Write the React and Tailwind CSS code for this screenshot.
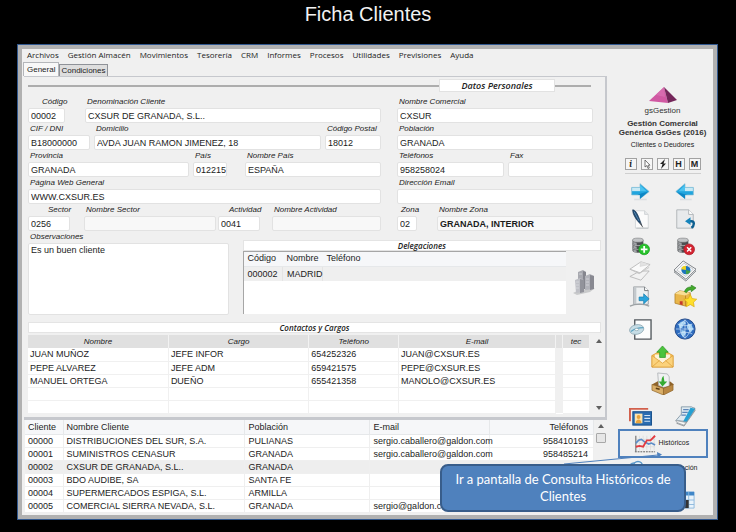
import { useId } from "react";

const menu = ["Archivos", "Gestión Almacén", "Movimientos", "Tesorería", "CRM", "Informes", "Procesos", "Utilidades", "Previsiones", "Ayuda"];

const contactos = [
  ["JUAN MUÑOZ", "JEFE INFOR", "654252326", "JUAN@CXSUR.ES"],
  ["PEPE ALVAREZ", "JEFE ADM", "659421575", "PEPE@CXSUR.ES"],
  ["MANUEL ORTEGA", "DUEÑO", "655421358", "MANOLO@CXSUR.ES"],
  ["", "", "", ""],
  ["", "", "", ""],
];

const clientes = [
  ["00000", "DISTRIBUCIONES DEL SUR, S.A.", "PULIANAS", "sergio.caballero@galdon.com", "958410193"],
  ["00001", "SUMINISTROS CENASUR", "GRANADA", "sergio.caballero@galdon.com", "958485214"],
  ["00002", "CXSUR DE GRANADA, S.L..", "GRANADA", "", ""],
  ["00003", "BDO AUDIBE, SA", "SANTA FE", "", ""],
  ["00004", "SUPERMERCADOS ESPIGA, S.L.", "ARMILLA", "", ""],
  ["00005", "COMERCIAL SIERRA NEVADA, S.L.", "GRANADA", "sergio@galdon.com", ""],
];

function Field({ label, value = "", className = "", labelClass = "pl-[2px]", inputClass = "bg-white" }) {
  const id = useId();
  return (
    <div className={`flex min-w-0 flex-col ${className}`}>
      <label htmlFor={id} className={`block h-3 whitespace-nowrap text-[8px] leading-[12px] font-medium italic ${labelClass}`}>
        {label}
      </label>
      <input
        id={id}
        defaultValue={value}
        className={`h-[15px] w-full min-w-0 rounded-[2px] border border-[#e2e2e2] pl-[2px] text-[9px] leading-[13px] outline-none ${inputClass}`}
      />
    </div>
  );
}

function SectionTitle({ children, className = "" }) {
  return (
    <h2 className={`h-[11px] border border-[#e4e4e4] bg-white text-center text-[8px] leading-[9px] font-semibold italic font-['Open_Sans',sans-serif] ${className}`}>
      {children}
    </h2>
  );
}

/* ---------- icons ---------- */

function Svg({ children, size = "size-[22px]" }) {
  return (
    <svg viewBox="0 0 24 24" className={`${size} shrink-0`} fill="none" aria-hidden="true">
      {children}
    </svg>
  );
}

const ArrowRight = () => (
  <Svg size="size-5">
    <path d="M5 21h15" stroke="#dcdfe2" strokeWidth="2" />
    <path d="M2 6.500h10V2L23 11.500 12 20v-4.500H2z" fill="#21a5de" stroke="#7fb9d2" strokeWidth=".8" />
    <path d="M2.500 7h9.500v4H2.500z" fill="#c9e9f4" />
    <path d="M12 3.500l8 7.500h-8z" fill="#4cc3f0" />
    <path d="M9 15l13-3.500L12 20v-4.500z" fill="#0d86c4" />
  </Svg>
);

const ArrowLeft = () => (
  <Svg size="size-5">
    <path d="M6 21h14" stroke="#dcdfe2" strokeWidth="2" />
    <path d="M22 6.500H12V2L1 11.500 12 20v-4.500h10z" fill="#21a5de" stroke="#7fb9d2" strokeWidth=".8" />
    <path d="M12 7h9.500v4H12z" fill="#c9e9f4" />
    <path d="M12 3.500L4 11h8z" fill="#4cc3f0" />
    <path d="M2 12l13 3.500h-3V20z" fill="#0d86c4" />
  </Svg>
);

const PenPage = () => (
  <Svg>
    <path d="M7 3h10l4 4v15H7z" fill="#fbfbfb" stroke="#d2d5d8" />
    <path d="M17 3v4h4" fill="#e6e8ea" stroke="#cfd2d5" />
    <path d="M8 22h13" stroke="#b9bdc0" />
    <path d="M4 2c3 0 5 4 7 9l3 8-4-4C7 11 4 7 4 2z" fill="#1d4a73" stroke="#122f4d" strokeWidth=".7" />
    <path d="M5.500 4c2 3 3 6 5.500 10" stroke="#6f9fc6" strokeWidth=".8" />
    <path d="M12 16l3 5" stroke="#555" strokeWidth="1" />
  </Svg>
);

const UndoPage = () => (
  <Svg>
    <path d="M3 2h13l5 5v15H3z" fill="#e8eaec" stroke="#aeb2b6" />
    <path d="M16 2v5h5" fill="#fff" stroke="#aeb2b6" />
    <path d="M16 14.500h3c3.500 0 3.500 5 0 7" stroke="#0c5f90" strokeWidth="2.600" />
    <path d="M12 14.500l6-4.500v8.500z" fill="#1483bb" />
  </Svg>
);

const Disks = () => (
  <>
    {[14, 9.5, 5].map((y) => (
      <g key={y}>
        <path d={`M3 ${y}v3.500c0 3.500 13 3.500 13 0V${y}z`} fill="#4d4f52" />
        <path d={`M4 ${y + 2}v2.500c1 1 3 1.300 4 1.300v-2.500z`} fill="#a2a5a8" />
        <ellipse cx="9.500" cy={y} rx="6.500" ry="2.500" fill="#c3c5c7" stroke="#6c6e70" strokeWidth=".6" />
      </g>
    ))}
  </>
);

const DbAdd = () => (
  <Svg size="size-5">
    <Disks />
    <circle cx="17" cy="16" r="6.500" fill="#27c32b" stroke="#12901a" strokeWidth=".7" />
    <path d="M17 12v8M13 16h8" stroke="#fff" strokeWidth="2.200" />
  </Svg>
);

const DbRemove = () => (
  <Svg size="size-5">
    <Disks />
    <circle cx="17" cy="16" r="6.500" fill="#d32331" stroke="#a01420" strokeWidth=".7" />
    <path d="M14.500 13.500l5 5M19.500 13.500l-5 5" stroke="#fff" strokeWidth="1.800" />
  </Svg>
);

const Layers = () => (
  <Svg>
    <path d="M1 18l11-6h10l-9 10z" fill="#f2f2f2" stroke="#b9b9b9" />
    <path d="M1 10l10 5 11-7" stroke="#c8c8c8" />
    <path d="M1 10L13 2l10 3-11 9z" fill="#fafafa" stroke="#bababa" />
    <path d="M13 2l-1 5 10-2" fill="#e2e2e2" stroke="#d0d0d0" strokeWidth=".6" />
  </Svg>
);

const ChartSheet = () => (
  <Svg>
    <path d="M0 13l13 10 11-11v-2z" fill="#e1e3e5" stroke="#888c90" />
    <path d="M0 11L10 1l14 9-11 11z" fill="#f7f8f9" stroke="#777b80" />
    <path d="M3 11l8-7.500L21 10l-8 8z" stroke="#bfc3c7" />
    <ellipse cx="13" cy="11" rx="5" ry="4.500" fill="#1d74bd" />
    <path d="M13 11l-5-1c0-3 4-4 5-3.500z" fill="#f0d420" />
    <path d="M13 11l5 1c-1 2.500-3 3.500-5 3.500z" fill="#43a047" />
  </Svg>
);

const ExportPage = () => (
  <Svg>
    <path d="M5 1h12l4 4v15H5z" fill="#eef0f1" stroke="#989ca0" />
    <path d="M5 1h3v19H5z" fill="#c3c8cc" />
    <path d="M17 1v4h4" fill="#fff" stroke="#6f7478" />
    <path d="M1 22c6-3 15-3 21 0" stroke="#9da2a5" strokeWidth="1.500" />
    <path d="M11 12h5V8.500l6 5.500-6 5.500V16h-5z" fill="#2aa4dc" stroke="#137aab" strokeWidth=".7" />
  </Svg>
);

const BoxStar = () => (
  <Svg size="size-[23px]">
    <path d="M1 9l5-3 11 2v12l-5 2-11-3z" fill="#e9b64a" stroke="#a8761c" strokeWidth=".7" />
    <path d="M1 9l5-3 11 2-5 3z" fill="#f8dd94" />
    <path d="M12 11v11" stroke="#c08b27" />
    <path d="M11 7c1-4 4-5 7-5V0l5 3-5 4V5c-2 0-4 1-5 3z" fill="#43a92c" stroke="#22771b" strokeWidth=".6" />
    <path d="M6 17h3v4l-3-1z" fill="#c4392d" />
    <path d="M17 10l2 4.200 4.700.6-3.400 3.200.8 4.700-4.100-2.300-4.200 2.300.9-4.700-3.500-3.200 4.700-.6z" fill="#ffdf2b" stroke="#d9a80c" strokeWidth=".7" />
  </Svg>
);

const CdPage = () => (
  <Svg size="size-[23px]">
    <path d="M6 2h17v20H6z" fill="#fcfdfd" stroke="#51575c" strokeWidth="1.400" />
    <ellipse cx="8" cy="12" rx="7.500" ry="5" transform="rotate(-12 8 12)" fill="#c6dde6" stroke="#8da7b2" strokeWidth=".8" />
    <path d="M2 14c4-3 8-4 13-4" stroke="#5aa3c2" strokeWidth="1.300" />
    <ellipse cx="8" cy="12" rx="2" ry="1.200" fill="#fff" stroke="#7b98a3" strokeWidth=".6" />
  </Svg>
);

const Globe = () => (
  <Svg>
    <circle cx="12" cy="12" r="11" fill="#2f6dc0" stroke="#1b4384" />
    <path d="M5 7c2-3 5-4 7-3l1 2-3 2-1 3-3 0zM8 13l4 1 1 3-3 4-2-3zM15 6l4 1 2 5-3 4-2-3-2-3z" fill="#a8d4f2" />
    <path d="M2 12h20M12 2v20M4 6.500c4 2.500 12 2.500 16 0M4 17.500c4-2.500 12-2.500 16 0M12 2c-7 6-7 14 0 20M12 2c7 6 7 14 0 20" stroke="#d9ebfa" strokeWidth=".7" />
  </Svg>
);

const MailUp = () => (
  <Svg size="size-[23px]">
    <path d="M1 11l11-6 11 6v12H1z" fill="#f6bf55" stroke="#d8962a" strokeWidth=".8" />
    <path d="M4 10h16v5l-8 5-8-5z" fill="#fdf3da" />
    <path d="M1 11l11 8 11-8v12H1z" fill="#fbd27c" stroke="#dd9f38" strokeWidth=".8" />
    <path d="M1 23l8-7M23 23l-8-7" stroke="#dd9f38" strokeWidth=".8" />
    <path d="M12 1l6 6.500h-3V13H9V7.500H6z" fill="#4cc33c" stroke="#22911f" strokeWidth=".7" />
  </Svg>
);

const BoxDown = () => (
  <Svg size="size-[23px]">
    <path d="M1 13l7-4 12 1 4 3-11 5z" fill="#8e632b" />
    <path d="M7 1l10 1 2 3v10l-6 1-5-2z" fill="#f0f1f2" stroke="#a9adb0" strokeWidth=".8" />
    <path d="M13 4c-2 2-2 4-2 6H8l4 5 5-5h-3z" fill="#35ab32" />
    <path d="M1 13l12 4v7L1 19z" fill="#d9ae68" stroke="#8c6126" strokeWidth=".7" />
    <path d="M13 17l10-4v6l-10 5z" fill="#b98742" stroke="#8c6126" strokeWidth=".7" />
    <path d="M5 17l4 1" stroke="#5b3c12" strokeWidth="1.500" />
  </Svg>
);

const Cards = () => (
  <Svg size="size-[23px]">
    <path d="M1 17V4h19" stroke="#d2604c" strokeWidth="2" />
    <rect x="4" y="7" width="19.500" height="14" fill="#2a6cb0" stroke="#17508c" />
    <rect x="6" y="9" width="8" height="10" fill="#fbe4b0" />
    <circle cx="10" cy="12.500" r="2" fill="#e8a33c" />
    <path d="M7 19c0-5 6-5 6 0z" fill="#e8a33c" />
    <path d="M16 11h6M16 14h6M16 17h6" stroke="#cfe3f5" strokeWidth="1.200" />
  </Svg>
);

const Notebook = () => (
  <Svg>
    <path d="M3 20l8 3 12-17-1-3z" fill="#c5c9cc" stroke="#80868b" strokeWidth=".8" />
    <path d="M8 2h11l4 2-9 14-12-1 6-7z" fill="#dfeaf1" stroke="#6e8595" strokeWidth=".8" />
    <path d="M18 3l5 1-9 14h-4z" fill="#25a0d2" />
    <path d="M10 5h6M9 8h6M8 11h5" stroke="#5e86b8" strokeWidth="1.200" />
    <path d="M2 17l11 2-2 3-8-3z" fill="#f7f8f8" stroke="#8e9499" strokeWidth=".7" />
  </Svg>
);

const LineChart = () => (
  <svg viewBox="0 0 24 20" className="h-5 w-[22px] shrink-0" fill="none" aria-hidden="true">
    <path d="M6 1v16M10 1v16M14 1v16M18 1v16M22 1v16M2 5h21M2 9h21M2 13h21" stroke="#d4d4d4" strokeWidth=".6" />
    <path d="M2 1v17" stroke="#555" />
    <path d="M1 18.500h22" stroke="#555" strokeDasharray="2 1" />
    <path d="M2 9l3-3 3-1 4 3 4 2 3-1 4 2" stroke="#5b8cc7" strokeWidth="1.800" />
    <path d="M2 13l4-1 4 1 4-7 4 0 5-5" stroke="#e23a3f" strokeWidth="2" />
  </svg>
);

const Buildings = () => (
  <svg viewBox="0 0 24 26" className="h-[26px] w-6 shrink-0" fill="none" aria-hidden="true">
    <path d="M1 24l6-3 16-2-5 4-13 3z" fill="#c9cacb" />
    <path d="M6 3l5-2 3 2v17H6z" fill="#a8a9b0" />
    <path d="M11 2l3 1v17h-3z" fill="#85868e" />
    <path d="M13 7l5-2 4 2v13l-9 1z" fill="#b2b3ba" />
    <path d="M18 6l4 1v13l-4 1z" fill="#888991" />
    <path d="M3 11l5-2 4 2v12l-8 1z" fill="#bfc0c6" />
    <path d="M8 10l4 1v12l-4 1z" fill="#92939b" />
    <path d="M4 13h3M4 16h3M4 19h3M14 10h3M14 13h3M14 16h3M7 5h3" stroke="#dddee2" strokeWidth=".7" />
  </svg>
);

const Pyramid = () => (
  <svg viewBox="0 0 28 18" className="h-[18px] w-7" aria-hidden="true">
    <path d="M15 1L0 15l19 2z" fill="#d058a2" />
    <path d="M15 1L28 14l-9 3z" fill="#74265a" />
    <path d="M15 1L7 9l9 2z" fill="#dc77b5" opacity=".6" />
  </svg>
);

const toolRows = [
  { h: "h-[27px]", items: [["Siguiente", ArrowRight], ["Anterior", ArrowLeft]] },
  { h: "h-[27px]", items: [["Editar", PenPage], ["Deshacer", UndoPage]] },
  { h: "h-[27px]", items: [["Añadir registro", DbAdd], ["Borrar registro", DbRemove]] },
  { h: "h-6", items: [["Capas", Layers], ["Informe", ChartSheet]] },
  { h: "h-[27px]", items: [["Exportar", ExportPage], ["Artículos", BoxStar]] },
  { h: "h-[33px] pt-[5px]", items: [["Documentos", CdPage], ["Web", Globe]] },
];

function ToolButton({ name, icon: Icon }) {
  return (
    <button type="button" aria-label={name} className="flex items-center justify-center">
      <Icon />
    </button>
  );
}

function Glyph({ name, children }) {
  return (
    <button type="button" aria-label={name} className="flex size-3 items-center justify-center border border-[#a2a2a2] bg-[#f6f6f6] text-[9px] leading-none font-bold text-[#222]">
      {children}
    </button>
  );
}

function Sidebar() {
  return (
    <aside className="flex w-[106px] shrink-0 flex-col items-center pt-[37px] pl-[5px]">
      <Pyramid />
      <p className="mt-[2px] text-[8px] leading-[10px] font-medium text-[#333]">gsGestion</p>
      <h1 className="mt-[3px] text-center text-[8px] leading-[9px] font-bold whitespace-nowrap text-[#333]">
        Gestión Comercial
        <br />
        Genérica GsGes (2016)
      </h1>
      <p className="mt-[3px] text-[7px] leading-[9px] whitespace-nowrap text-[#222]">Clientes o Deudores</p>
      <div className="mt-[9px] flex gap-1 border-b border-[#cfcfcf] pb-[3px]">
        <Glyph name="Información"><span className="font-serif italic">i</span></Glyph>
        <Glyph name="Cursor">
          <svg viewBox="0 0 10 10" className="size-[10px]" aria-hidden="true"><path d="M3 1v7l2-1.500 1 3 1.300-.6-1.100-2.700H8z" fill="#fff" stroke="#555" strokeWidth=".8" /></svg>
        </Glyph>
        <Glyph name="Acción rápida">
          <svg viewBox="0 0 10 10" className="size-[10px]" aria-hidden="true"><path d="M7 0L2 5h2.500L3 10l5-5.500H5.500z" fill="#222" /></svg>
        </Glyph>
        <Glyph name="Histórico">H</Glyph>
        <Glyph name="Memo">M</Glyph>
      </div>
      <div className="mt-[4px] w-[90px]">
        {toolRows.map((row) => (
          <div key={row.items[0][0]} className={`grid grid-cols-2 ${row.h}`}>
            {row.items.map(([name, icon]) => <ToolButton key={name} name={name} icon={icon} />)}
          </div>
        ))}
        <div className="flex h-[27px] justify-center"><ToolButton name="Enviar correo" icon={MailUp} /></div>
        <div className="flex h-[27px] justify-center"><ToolButton name="Archivar" icon={BoxDown} /></div>
        <div className="mt-[6px] grid h-[26px] grid-cols-2">
          <ToolButton name="Tarjetas" icon={Cards} />
          <ToolButton name="Agenda" icon={Notebook} />
        </div>
      </div>
      <button type="button" className="flex h-[29px] w-[90px] items-center gap-[3px] border-2 border-[#4f81bd] pl-[14px] text-[7px] font-medium">
        <LineChart />
        Históricos
      </button>
      <button type="button" className="mt-[2px] flex h-4 w-[70px] items-center justify-between text-[7px] font-medium">
        <svg viewBox="0 0 16 16" className="size-4" fill="none" aria-hidden="true">
          <circle cx="6" cy="8" r="5" fill="#d9eaf6" stroke="#5a97c9" strokeWidth="1.500" />
          <circle cx="10" cy="6" r="4.500" fill="#eaf3fa" stroke="#5a97c9" strokeWidth="1.500" />
        </svg>
        Facturación
      </button>
      <button type="button" aria-label="Hoja de datos" className="mt-[15px] ml-[46px]">
        <svg viewBox="0 0 20 20" className="size-[18px]" aria-hidden="true">
          <path d="M1 1h18v18H1z" fill="#e9f3fb" stroke="#8ab7dd" />
          <path d="M1 3h18" stroke="#3f86c8" strokeWidth="4" />
          <path d="M13 1v18M1 10h18M1 15h18" stroke="#8ab7dd" />
          <path d="M9 10h4v9H9z" fill="#333" />
        </svg>
      </button>
    </aside>
  );
}

function Delegaciones() {
  return (
    <section className="min-w-0 flex-1 pt-[9px]">
      <div className="ml-[14px]">
        <SectionTitle>Delegaciones</SectionTitle>
        <div className="flex items-start">
          <div className="h-[63px] flex-1 border-t border-l border-[#a6a6a6] bg-white">
            <table className="w-full table-fixed border-collapse text-left text-[9px] whitespace-nowrap">
              <colgroup><col className="w-[39px]" /><col className="w-10" /><col /></colgroup>
              <thead>
                <tr className="h-[14px] bg-[#f6f7f9]">
                  {["Código", "Nombre", "Teléfono"].map((h) => (
                    <th key={h} className="border-b border-[#e6e8ea] p-0 pl-1 leading-[13px] font-normal">{h}</th>
                  ))}
                </tr>
              </thead>
              <tbody>
                <tr className="h-[14px] bg-[#efefef]">
                  <td className="border-r border-[#e4e4e4] p-0 pl-1 leading-[14px]">000002</td>
                  <td className="border-r border-[#e4e4e4] p-0 pl-1 leading-[14px]">MADRID</td>
                  <td className="p-0" />
                </tr>
              </tbody>
            </table>
          </div>
          <div className="flex w-[35px] justify-center pt-[18px]"><Buildings /></div>
        </div>
      </div>
    </section>
  );
}

function Contactos() {
  const th = "h-[13px] border-r border-[#f2f2f2] bg-[#e0e0e0] p-0 text-center text-[8px] leading-[13px] font-medium italic";
  const td = "border-r border-b border-[#f0f0f0] p-0 pl-[2px] leading-[12px]";
  return (
    <section className="mt-[7px]">
      <SectionTitle className="mr-1">Contactos y Cargos</SectionTitle>
      <div className="mt-[2px] flex">
        <table className="mr-[2px] w-full flex-1 table-fixed border-collapse bg-white whitespace-nowrap">
          <colgroup>
            <col className="w-[25%]" /><col className="w-[25%]" /><col className="w-[16%]" /><col /><col className="w-[7px]" /><col className="w-[27px]" />
          </colgroup>
          <thead>
            <tr>
              <th className={th}>Nombre</th><th className={th}>Cargo</th><th className={th}>Teléfono</th><th className={th}>E-mail</th><th className={th} /><th className={th}>tec</th>
            </tr>
          </thead>
          <tbody className="text-[9px]">
            {contactos.map((row, i) => (
              <tr key={i} className="h-[13px]">
                {row.map((cell, j) => <td key={j} className={td}>{cell}</td>)}
                <td className="bg-[#f0f0f0] p-0" />
                <td className={td} />
              </tr>
            ))}
          </tbody>
        </table>
        <ScrollBar />
      </div>
    </section>
  );
}

function ScrollBar({ thumb = false }) {
  return (
    <div className="flex w-[13px] shrink-0 flex-col items-center justify-between bg-[#f0f0f0] py-1">
      <div className="flex flex-col items-center gap-[5px]">
        <svg viewBox="0 0 6 4" className="h-1 w-[6px]" aria-hidden="true"><path d="M3 0l3 4H0z" fill="#606060" /></svg>
        {thumb && <div className="h-[10px] w-[10px] rounded-[1px] border border-[#a8a8a8] bg-[#e6e6e6]" />}
      </div>
      <svg viewBox="0 0 6 4" className="h-1 w-[6px]" aria-hidden="true"><path d="M0 0h6L3 4z" fill="#606060" /></svg>
    </div>
  );
}

function Clientes() {
  return (
    <section className="ml-[3px] flex bg-white">
      <table className="w-full flex-1 table-fixed border-collapse text-left whitespace-nowrap">
        <colgroup>
          <col className="w-[38px]" /><col className="w-[32%]" /><col className="w-[22%]" /><col className="w-[21%]" /><col />
        </colgroup>
        <thead>
          <tr className="h-[15px] bg-[#f6f7f9] text-[9px]">
            {["Cliente", "Nombre Cliente", "Población", "E-mail", "Teléfonos"].map((h) => (
              <th key={h} className="border-r border-b border-[#e6e8ea] p-0 pr-[5px] pl-[3px] leading-[14px] font-normal last:text-right">{h}</th>
            ))}
          </tr>
        </thead>
        <tbody className="text-[9px]">
          {clientes.map((row, i) => (
            <tr key={row[0]} className={i === 2 ? "h-[13px] bg-[#eeeeee]" : "h-[13px]"}>
              {row.map((cell, j) => (
                <td key={j} className="border-r border-b border-[#efefef] p-0 pr-[5px] pl-[3px] leading-[12px] last:text-right">{cell}</td>
              ))}
            </tr>
          ))}
        </tbody>
      </table>
      <ScrollBar thumb />
    </section>
  );
}

export default function App() {
  const obs = useId();
  return (
    <div className="min-h-screen bg-black pb-[11px] font-['Liberation_Sans',Arial,sans-serif] text-[#1c1c1c]">
      <header className="h-11 pt-[2px] text-center text-[20px] leading-[24px] text-[#f2f2f2]">Ficha Clientes</header>
      <div className="relative mr-[18px] ml-[17px] border border-[#31588f]">
        <div className="flex border-4 border-[#b1b1b1] bg-[#f0f0f0] pb-[2px]">
          <main className="min-w-0 flex-1">
            <nav className="flex h-[13px] items-start gap-[9px] pl-[5px] text-[8px] leading-[11px] font-medium font-['Open_Sans',sans-serif]">
              {menu.map((m) => <button key={m} type="button">{m}</button>)}
            </nav>
            <div role="tablist" className="flex h-[14px] items-end pl-[1px] text-[8px]">
              <button type="button" role="tab" aria-selected="true" className="h-[14px] border-x border-t border-[#b4b6ba] bg-[#f8f8f8] px-[3px] leading-[12px] font-medium">General</button>
              <button type="button" role="tab" aria-selected="false" className="h-3 border border-b-0 border-[#8f9298] bg-[#dedede] px-[1px] leading-[12px] font-medium">Condiciones</button>
            </div>
            <div className="ml-[2px] border-t border-r-2 border-b-3 border-[#c6c8cd] pt-[2px] pb-[3px] pl-1">
              <div className="mr-[14px] flex h-[13px] items-center">
                <span className="h-[2px] flex-1 bg-[#adadad]" />
                <h2 className="h-[13px] w-[116px] border border-[#e2e2e2] bg-white text-center text-[9px] leading-[11px] font-semibold italic font-['Open_Sans',sans-serif]">Datos Personales</h2>
                <span className="h-[2px] w-9 bg-[#adadad]" />
              </div>
              <form className="mt-1">
                <div className="mr-3 grid grid-cols-[9fr_5fr] gap-x-4">
                  <div className="min-w-0">
                    <div className="flex gap-5">
                      <Field label="Código" value="00002" className="w-[37px]" labelClass="pl-[14px]" />
                      <Field label="Denominación Cliente" value="CXSUR DE GRANADA, S.L.." className="flex-1" />
                    </div>
                    <div className="flex gap-1">
                      <Field label="CIF / DNI" value="B18000000" className="w-[62px]" />
                      <Field label="Domicilio" value="AVDA JUAN RAMON JIMENEZ, 18" className="flex-1" />
                      <Field label="Código Postal" value="18012" className="w-14" />
                    </div>
                    <div className="flex gap-1">
                      <Field label="Provincia" value="GRANADA" className="flex-1" />
                      <Field label="País" value="012215" className="mr-[14px] w-[34px]" />
                      <Field label="Nombre País" value="ESPAÑA" className="w-[136px]" />
                    </div>
                    <Field label="Página Web General" value="WWW.CXSUR.ES" />
                    <div className="flex">
                      <Field label="Sector" value="0256" className="mr-[14px] w-[42px]" labelClass="pl-5" />
                      <Field label="Nombre Sector" className="mr-[2px] flex-1" inputClass="bg-[#f8f8f8]" />
                      <Field label="Actividad" value="0041" className="mr-3 w-[42px]" labelClass="pl-[11px]" />
                      <Field label="Nombre Actividad" className="w-[109px]" inputClass="bg-[#f8f8f8]" />
                    </div>
                  </div>
                  <div className="min-w-0">
                    <Field label="Nombre Comercial" value="CXSUR" />
                    <Field label="Población" value="GRANADA" />
                    <div className="flex gap-1">
                      <Field label="Teléfonos" value="958258024" className="flex-1" />
                      <Field label="Fax" className="w-[85px]" />
                    </div>
                    <Field label="Dirección Email" />
                    <div className="flex gap-5">
                      <Field label="Zona" value="02" className="w-5" labelClass="pl-1" />
                      <Field label="Nombre Zona" value="GRANADA, INTERIOR" className="flex-1" inputClass="bg-[#f8f8f8] font-bold" />
                    </div>
                  </div>
                </div>
                <div className="mr-1 flex">
                  <div className="w-[35%]">
                    <label htmlFor={obs} className="block h-3 pl-[2px] text-[8px] leading-[12px] font-medium italic">Observaciones</label>
                    <textarea id={obs} defaultValue="Es un buen cliente" className="block h-[72px] w-full resize-none rounded-[2px] border border-[#e2e2e2] bg-white px-[2px] text-[9px] leading-[13px] outline-none" />
                  </div>
                  <Delegaciones />
                </div>
              </form>
              <Contactos />
            </div>
            <Clientes />
          </main>
          <Sidebar />
        </div>
        <svg viewBox="0 0 100 14" className="absolute right-[54px] bottom-[54px] h-[14px] w-[100px]" fill="none" aria-hidden="true">
          <path d="M1 13L95 4" stroke="#4f81bd" />
          <path d="M94 1l5 2.500-4.500 3z" fill="#4f81bd" />
        </svg>
        <p className="absolute right-[31px] bottom-[7px] flex h-12 w-[246px] items-center justify-center rounded-lg border-2 border-[#385d8a] bg-[#4f81bd] px-2 text-center text-[13px] leading-[17px] text-white font-['Lato',sans-serif]">
          Ir a pantalla de Consulta Históricos de Clientes
        </p>
      </div>
    </div>
  );
}
